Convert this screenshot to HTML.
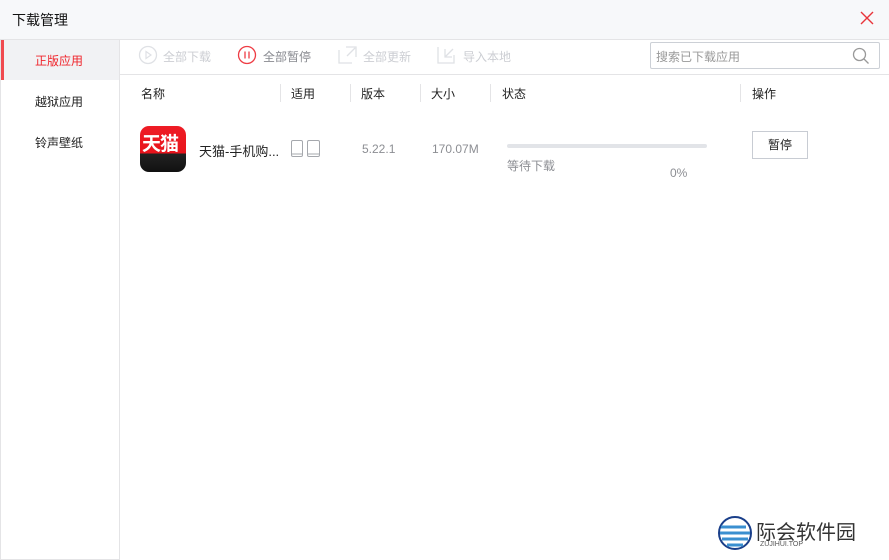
<!DOCTYPE html>
<html><head><meta charset="utf-8"><style>
*{margin:0;padding:0;box-sizing:border-box}
body{width:889px;height:560px;background:#fff;font-family:"Liberation Sans","Noto Sans CJK SC",sans-serif;font-size:12px;color:#222;position:relative;overflow:hidden}
.a{position:absolute;white-space:nowrap}
</style></head><body>
<div class="a" style="left:0;top:0;width:889px;height:40px;background:#f7f8fa;border-bottom:1px solid #e4e4e6"></div>
<div class="a" style="left:12px;top:10px;font-size:14px;color:#111">下载管理</div>
<svg class="a" style="left:860px;top:11px" width="14" height="14"><path d="M1 1L13 13M13 1L1 13" stroke="#e8343a" stroke-width="1.4"/></svg>
<div class="a" style="left:0;top:40px;width:120px;height:520px;border-right:1px solid #e4e4e6;border-left:1px solid #e4e4e6;border-bottom:1px solid #e4e4e6"></div>
<div class="a" style="left:1px;top:40px;width:118px;height:40px;background:#f1f2f4;border-left:3px solid #f04a4f"></div>
<div class="a" style="left:35px;top:52px;color:#f0252c">正版应用</div>
<div class="a" style="left:35px;top:93px">越狱应用</div>
<div class="a" style="left:35px;top:134px">铃声壁纸</div>
<div class="a" style="left:120px;top:74px;width:769px;height:1px;background:#e4e4e6"></div>
<svg class="a" style="left:138px;top:45px" width="20" height="20"><circle cx="10" cy="10" r="8.5" fill="none" stroke="#dfe1e5" stroke-width="1.3"/><path d="M8 6.5L13 10L8 13.5Z" fill="none" stroke="#dfe1e5" stroke-width="1.2"/></svg>
<div class="a" style="left:163px;top:48px;color:#ccced3">全部下载</div>
<svg class="a" style="left:237px;top:45px" width="20" height="20"><circle cx="10" cy="10" r="8.5" fill="none" stroke="#ee3c44" stroke-width="1.3"/><path d="M8 6.5V13.5M12 6.5V13.5" stroke="#ee3c44" stroke-width="1.3"/></svg>
<div class="a" style="left:263px;top:48px;color:#888a90">全部暂停</div>
<svg class="a" style="left:338px;top:45px" width="20" height="20"><path d="M1 5V18H14M8 2H18V12M17 3L9 11" fill="none" stroke="#dfe1e5" stroke-width="1.3"/></svg>
<div class="a" style="left:363px;top:48px;color:#ccced3">全部更新</div>
<svg class="a" style="left:437px;top:45px" width="20" height="20"><path d="M1 2V18H17V10M8 4V12H15M8 12L16 4" fill="none" stroke="#dfe1e5" stroke-width="1.3"/></svg>
<div class="a" style="left:463px;top:48px;color:#ccced3">导入本地</div>
<div class="a" style="left:650px;top:42px;width:230px;height:27px;border:1px solid #ccd0d6;border-radius:2px"></div>
<div class="a" style="left:656px;top:48px;color:#999">搜索已下载应用</div>
<svg class="a" style="left:852px;top:47px" width="18" height="18"><circle cx="7.5" cy="7.5" r="6" fill="none" stroke="#999" stroke-width="1.3"/><path d="M12 12L16.5 16.5" stroke="#999" stroke-width="1.3"/></svg>
<div class="a" style="left:141px;top:85px">名称</div>
<div class="a" style="left:291px;top:85px">适用</div>
<div class="a" style="left:361px;top:85px">版本</div>
<div class="a" style="left:431px;top:85px">大小</div>
<div class="a" style="left:502px;top:85px">状态</div>
<div class="a" style="left:752px;top:85px">操作</div>
<div class="a" style="left:280px;top:84px;width:1px;height:18px;background:#e4e4e6"></div>
<div class="a" style="left:350px;top:84px;width:1px;height:18px;background:#e4e4e6"></div>
<div class="a" style="left:420px;top:84px;width:1px;height:18px;background:#e4e4e6"></div>
<div class="a" style="left:490px;top:84px;width:1px;height:18px;background:#e4e4e6"></div>
<div class="a" style="left:740px;top:84px;width:1px;height:18px;background:#e4e4e6"></div>
<div class="a" style="left:140px;top:126px;width:46px;height:46px;border-radius:9px;background:linear-gradient(#ee1c25 0,#e8141c 60%,#222 60%,#111 100%);overflow:hidden"></div>
<div class="a" style="left:142px;top:129px;font-size:19px;font-weight:bold;color:#fff;letter-spacing:-1px">天猫</div>
<div class="a" style="left:199px;top:141px;font-size:13px">天猫-手机购...</div>
<svg class="a" style="left:291px;top:140px" width="30" height="18"><rect x="0.5" y="0.5" width="11" height="16" rx="1.5" fill="none" stroke="#a5a8ad"/><rect x="16.5" y="0.5" width="12" height="16" rx="1.5" fill="none" stroke="#a5a8ad"/><path d="M1 14H11M17 14H28" stroke="#a5a8ad"/></svg>
<div class="a" style="left:362px;top:142px;color:#8c8e93">5.22.1</div>
<div class="a" style="left:432px;top:142px;color:#8c8e93">170.07M</div>
<div class="a" style="left:507px;top:144px;width:200px;height:4px;border-radius:2px;background:#e2e4e8"></div>
<div class="a" style="left:507px;top:157px;color:#8c8e93">等待下载</div>
<div class="a" style="left:670px;top:166px;color:#8c8e93">0%</div>
<div class="a" style="left:752px;top:131px;width:56px;height:28px;border:1px solid #c8ccd3;text-align:center;line-height:26px">暂停</div>
<svg class="a" style="left:718px;top:515px" width="36" height="36"><circle cx="17" cy="18" r="16" fill="#fff" stroke="#1a3f8a" stroke-width="2"/><path d="M3 12H28M2 18H32M4 24H30M9 30H25" stroke="#3a8fd0" stroke-width="3"/></svg>
<div class="a" style="left:756px;top:516px;font-size:20px;color:#333">际会软件园</div>
<div class="a" style="left:760px;top:541px;font-size:7px;color:#555">ZUJIHUI.TOP</div>
</body></html>
